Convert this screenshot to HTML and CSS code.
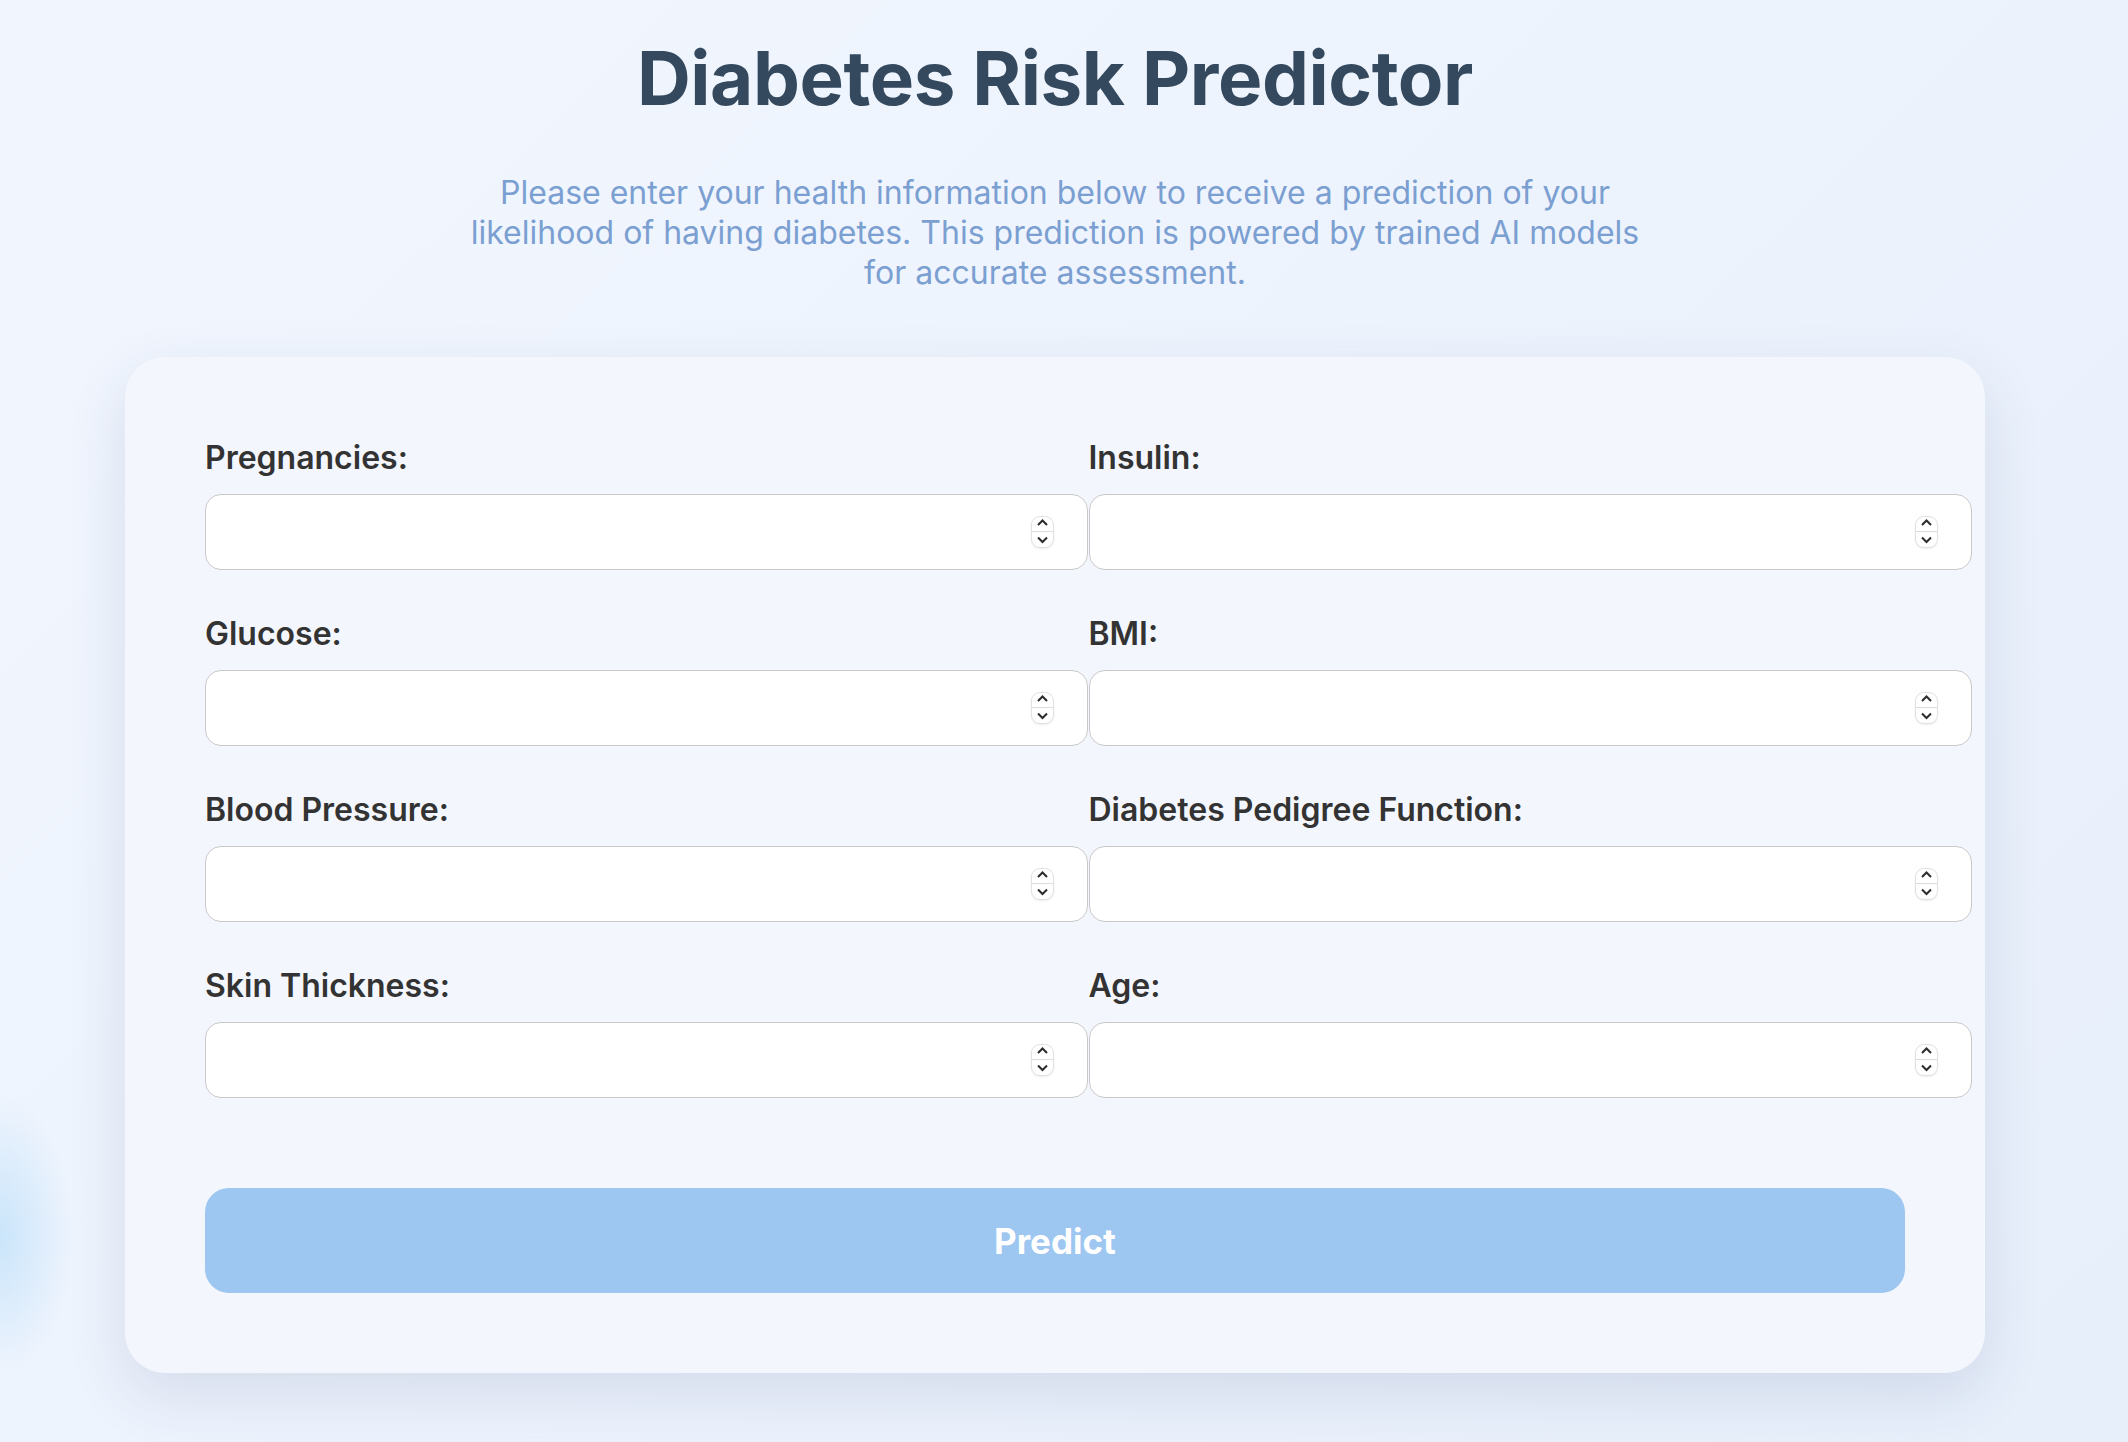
FILE: index.html
```html
<!DOCTYPE html>
<html lang="en">
<head>
<meta charset="utf-8">
<title>Diabetes Risk Predictor</title>
<link rel="stylesheet" href="styles.css">
</head>
<body>
<main class="page">
  <h1 class="title">Diabetes Risk Predictor</h1>
  <p class="intro">Please enter your health information below to receive a prediction of your likelihood of having diabetes. This prediction is powered by trained AI models for accurate assessment.</p>
  <form class="card">
    <div class="grid">
      <div class="field">
        <label class="label" for="f1">Pregnancies:</label>
        <div class="control"><input id="f1" class="input" type="number"><span class="spin"><svg width="23" height="32" viewBox="0 0 23 32"><path d="M7 9 L11.5 4.5 L16 9" fill="none" stroke="#2b2b2b" stroke-width="2"/><path d="M1 15.5 H22" stroke="#dcdcdc" stroke-width="1"/><path d="M7 21.5 L11.5 26 L16 21.5" fill="none" stroke="#2b2b2b" stroke-width="2"/></svg></span></div>
      </div>
      <div class="field">
        <label class="label" for="f5">Insulin:</label>
        <div class="control"><input id="f5" class="input" type="number"><span class="spin"><svg width="23" height="32" viewBox="0 0 23 32"><path d="M7 9 L11.5 4.5 L16 9" fill="none" stroke="#2b2b2b" stroke-width="2"/><path d="M1 15.5 H22" stroke="#dcdcdc" stroke-width="1"/><path d="M7 21.5 L11.5 26 L16 21.5" fill="none" stroke="#2b2b2b" stroke-width="2"/></svg></span></div>
      </div>
      <div class="field">
        <label class="label" for="f2">Glucose:</label>
        <div class="control"><input id="f2" class="input" type="number"><span class="spin"><svg width="23" height="32" viewBox="0 0 23 32"><path d="M7 9 L11.5 4.5 L16 9" fill="none" stroke="#2b2b2b" stroke-width="2"/><path d="M1 15.5 H22" stroke="#dcdcdc" stroke-width="1"/><path d="M7 21.5 L11.5 26 L16 21.5" fill="none" stroke="#2b2b2b" stroke-width="2"/></svg></span></div>
      </div>
      <div class="field">
        <label class="label" for="f6">BMI:</label>
        <div class="control"><input id="f6" class="input" type="number"><span class="spin"><svg width="23" height="32" viewBox="0 0 23 32"><path d="M7 9 L11.5 4.5 L16 9" fill="none" stroke="#2b2b2b" stroke-width="2"/><path d="M1 15.5 H22" stroke="#dcdcdc" stroke-width="1"/><path d="M7 21.5 L11.5 26 L16 21.5" fill="none" stroke="#2b2b2b" stroke-width="2"/></svg></span></div>
      </div>
      <div class="field">
        <label class="label" for="f3">Blood Pressure:</label>
        <div class="control"><input id="f3" class="input" type="number"><span class="spin"><svg width="23" height="32" viewBox="0 0 23 32"><path d="M7 9 L11.5 4.5 L16 9" fill="none" stroke="#2b2b2b" stroke-width="2"/><path d="M1 15.5 H22" stroke="#dcdcdc" stroke-width="1"/><path d="M7 21.5 L11.5 26 L16 21.5" fill="none" stroke="#2b2b2b" stroke-width="2"/></svg></span></div>
      </div>
      <div class="field">
        <label class="label" for="f7">Diabetes Pedigree Function:</label>
        <div class="control"><input id="f7" class="input" type="number"><span class="spin"><svg width="23" height="32" viewBox="0 0 23 32"><path d="M7 9 L11.5 4.5 L16 9" fill="none" stroke="#2b2b2b" stroke-width="2"/><path d="M1 15.5 H22" stroke="#dcdcdc" stroke-width="1"/><path d="M7 21.5 L11.5 26 L16 21.5" fill="none" stroke="#2b2b2b" stroke-width="2"/></svg></span></div>
      </div>
      <div class="field">
        <label class="label" for="f4">Skin Thickness:</label>
        <div class="control"><input id="f4" class="input" type="number"><span class="spin"><svg width="23" height="32" viewBox="0 0 23 32"><path d="M7 9 L11.5 4.5 L16 9" fill="none" stroke="#2b2b2b" stroke-width="2"/><path d="M1 15.5 H22" stroke="#dcdcdc" stroke-width="1"/><path d="M7 21.5 L11.5 26 L16 21.5" fill="none" stroke="#2b2b2b" stroke-width="2"/></svg></span></div>
      </div>
      <div class="field">
        <label class="label" for="f8">Age:</label>
        <div class="control"><input id="f8" class="input" type="number"><span class="spin"><svg width="23" height="32" viewBox="0 0 23 32"><path d="M7 9 L11.5 4.5 L16 9" fill="none" stroke="#2b2b2b" stroke-width="2"/><path d="M1 15.5 H22" stroke="#dcdcdc" stroke-width="1"/><path d="M7 21.5 L11.5 26 L16 21.5" fill="none" stroke="#2b2b2b" stroke-width="2"/></svg></span></div>
      </div>
    </div>
    <button class="predict" type="button">Predict</button>
  </form>
</main>
</body>
</html>
```

FILE: styles.css
```css
html, body {
  margin: 0;
  padding: 0;
}

body {
  min-height: 1442px;
  font-family: Inter, "Noto Sans", "Liberation Sans", sans-serif;
  background:
    radial-gradient(ellipse 75px 140px at 0 1235px, rgba(200, 228, 250, 0.95), rgba(220, 236, 252, 0) 100%),
    linear-gradient(135deg, #f1f6fe 0%, #edf3fd 50%, #e7effb 100%);
}

.page {
  padding: 34px 143px 60px 125px;
  display: flex;
  flex-direction: column;
  align-items: center;
}

.title {
  margin: 0;
  font-size: 74.5px;
  line-height: 89px;
  font-weight: 700;
  color: #34495e;
  letter-spacing: -0.4px;
  text-align: center;
}

.intro {
  margin: 50px 0 0;
  max-width: 1190px;
  font-size: 32px;
  line-height: 40px;
  color: #7b9fd1;
  text-align: center;
}

.card {
  align-self: stretch;
  margin-top: 64px;
  padding: 82px 80px 80px;
  background: #f3f7fd;
  border-radius: 40px;
  box-shadow: 0 22px 60px rgba(40, 60, 110, 0.12);
  display: flex;
  flex-direction: column;
}

.grid {
  display: grid;
  grid-template-columns: minmax(0, 1fr) minmax(0, 1fr);
  column-gap: 67px;
  row-gap: 45px;
}

.field {
  min-width: 0;
  display: flex;
  flex-direction: column;
  align-items: flex-start;
}

.label {
  font-size: 32px;
  line-height: 37px;
  font-weight: 600;
  color: #333333;
  margin-bottom: 18px;
}

.control {
  position: relative;
}

.input {
  box-sizing: content-box;
  width: 816px;
  height: 74px;
  padding: 0 32px 0 33px;
  margin: 0;
  border: 1px solid #c9c9c9;
  border-radius: 16px;
  background: #ffffff;
  font-family: inherit;
  font-size: 28px;
  -moz-appearance: textfield;
  appearance: textfield;
}

.input::-webkit-outer-spin-button,
.input::-webkit-inner-spin-button {
  -webkit-appearance: none;
  margin: 0;
}

.spin {
  position: absolute;
  right: 34px;
  top: 22px;
  width: 23px;
  height: 32px;
  box-sizing: border-box;
  border: 1px solid #e2e2e2;
  border-radius: 9px;
  background: #ffffff;
  box-shadow: 0 1px 2px rgba(0, 0, 0, 0.08);
  overflow: hidden;
}

.spin svg {
  display: block;
  margin: -1px;
}

.predict {
  margin-top: 90px;
  height: 105px;
  border: none;
  border-radius: 24px;
  background: #9dc6f1;
  color: #ffffff;
  font-family: inherit;
  font-size: 35px;
  font-weight: 700;
  cursor: pointer;
}
```
